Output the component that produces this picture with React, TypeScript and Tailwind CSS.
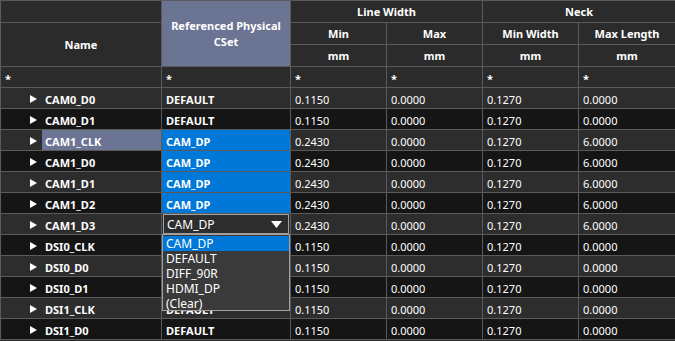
import React from "react";

const rows: { name: string; cset: string; min: string; nl: string; sel?: boolean; combo?: boolean }[] = [
  { name: "CAM0_D0", cset: "DEFAULT", min: "0.1150", nl: "0.0000" },
  { name: "CAM0_D1", cset: "DEFAULT", min: "0.1150", nl: "0.0000" },
  { name: "CAM1_CLK", cset: "CAM_DP", min: "0.2430", nl: "6.0000", sel: true },
  { name: "CAM1_D0", cset: "CAM_DP", min: "0.2430", nl: "6.0000", sel: true },
  { name: "CAM1_D1", cset: "CAM_DP", min: "0.2430", nl: "6.0000", sel: true },
  { name: "CAM1_D2", cset: "CAM_DP", min: "0.2430", nl: "6.0000", sel: true },
  { name: "CAM1_D3", cset: "CAM_DP", min: "0.2430", nl: "6.0000", combo: true },
  { name: "DSI0_CLK", cset: "DEFAULT", min: "0.1150", nl: "0.0000" },
  { name: "DSI0_D0", cset: "DEFAULT", min: "0.1150", nl: "0.0000" },
  { name: "DSI0_D1", cset: "DEFAULT", min: "0.1150", nl: "0.0000" },
  { name: "DSI1_CLK", cset: "DEFAULT", min: "0.1150", nl: "0.0000" },
  { name: "DSI1_D0", cset: "DEFAULT", min: "0.1150", nl: "0.0000" },
];

const Tri = () => (
  <svg width="7" height="8" viewBox="0 0 7 8" className="shrink-0">
    <path d="M0 0 L7 4 L0 8 Z" fill="#ffffff" />
  </svg>
);

const B = "border border-[#5a5a5a]";

export default function App() {
  return (
    <div
      className="w-[675px] h-[341px] overflow-hidden bg-[#2b2b2b] text-white relative"
      style={{ fontFamily: '"Noto Sans", "Open Sans", sans-serif' }}
    >
      <table className="border-collapse table-fixed text-[11px] leading-none" style={{ width: 675 }}>
        <colgroup>
          <col style={{ width: 161 }} />
          <col style={{ width: 129 }} />
          <col style={{ width: 96 }} />
          <col style={{ width: 96 }} />
          <col style={{ width: 96 }} />
          <col style={{ width: 97 }} />
        </colgroup>
        <thead>
          <tr className="h-[22px] bg-[#2b2b2b] font-bold">
            <th className={`${B}`}></th>
            <th rowSpan={3} className={`${B} bg-[#6b7493] font-bold leading-[16px] px-2`}>
              Referenced Physical CSet
            </th>
            <th colSpan={2} className={`${B}`}>Line Width</th>
            <th colSpan={2} className={`${B}`}>Neck</th>
          </tr>
          <tr className="h-[22px] font-bold">
            <th rowSpan={2} className={`${B}`}>Name</th>
            <th className={`${B}`}>Min</th>
            <th className={`${B}`}>Max</th>
            <th className={`${B}`}>Min Width</th>
            <th className={`${B}`}>Max Length</th>
          </tr>
          <tr className="h-[22px] font-bold">
            <th className={`${B}`}>mm</th>
            <th className={`${B}`}>mm</th>
            <th className={`${B}`}>mm</th>
            <th className={`${B}`}>mm</th>
          </tr>
          <tr className="h-[21px] font-bold text-left">
            {[0, 1, 2, 3, 4, 5].map((i) => (
              <th key={i} className={`${B} px-[4px] pt-[2px] text-left align-middle`}>*</th>
            ))}
          </tr>
        </thead>
        <tbody>
          {rows.map((r, i) => (
            <tr key={r.name} className={`h-[21px] ${i % 2 === 0 ? "bg-[#2d2d2d]" : "bg-[#151515]"}`}>
              <td className={`${B} p-0`}>
                <div className="flex items-center h-[20px]">
                  <div className="w-[41px] flex justify-end pr-[5px] pt-[1px]">
                    <Tri />
                  </div>
                  <div
                    className={`flex-1 h-full flex items-center pl-[3px] pt-[3px] font-bold ${
                      r.name === "CAM1_CLK" ? "bg-[#6b7493]" : ""
                    }`}
                  >
                    {r.name}
                  </div>
                </div>
              </td>
              <td className={`${B} p-0 ${r.sel ? "bg-[#0078d7]" : ""}`}>
                {r.combo ? (
                  <div className="h-[20px] mx-[1px] border border-[#a0a0a0] bg-[#2d2d2d] flex items-center justify-between pl-[3px] pr-[6px] pt-[1px] text-[12px] font-normal">
                    <span>CAM_DP</span>
                    <svg width="11" height="7" viewBox="0 0 11 7">
                      <path d="M0 0 L11 0 L5.5 7 Z" fill="#ffffff" />
                    </svg>
                  </div>
                ) : (
                  <div className="px-[4px] pt-[3px] font-bold">{r.cset}</div>
                )}
              </td>
              <td className={`${B} px-[4px] pt-[3px]`}>{r.min}</td>
              <td className={`${B} px-[4px] pt-[3px]`}>0.0000</td>
              <td className={`${B} px-[4px] pt-[3px]`}>0.1270</td>
              <td className={`${B} px-[4px] pt-[3px]`}>{r.nl}</td>
            </tr>
          ))}
        </tbody>
      </table>
      <div className="absolute left-[162px] top-[234px] w-[128px] h-[77px] bg-[#3a3a3a] border border-[#a0a0a0] text-[12px] leading-[15px] py-[1px]">
        <div className="bg-[#0078d7] pl-[3px]">CAM_DP</div>
        <div className="pl-[3px]">DEFAULT</div>
        <div className="pl-[3px]">DIFF_90R</div>
        <div className="pl-[3px]">HDMI_DP</div>
        <div className="pl-[3px]">(Clear)</div>
      </div>
    </div>
  );
}
